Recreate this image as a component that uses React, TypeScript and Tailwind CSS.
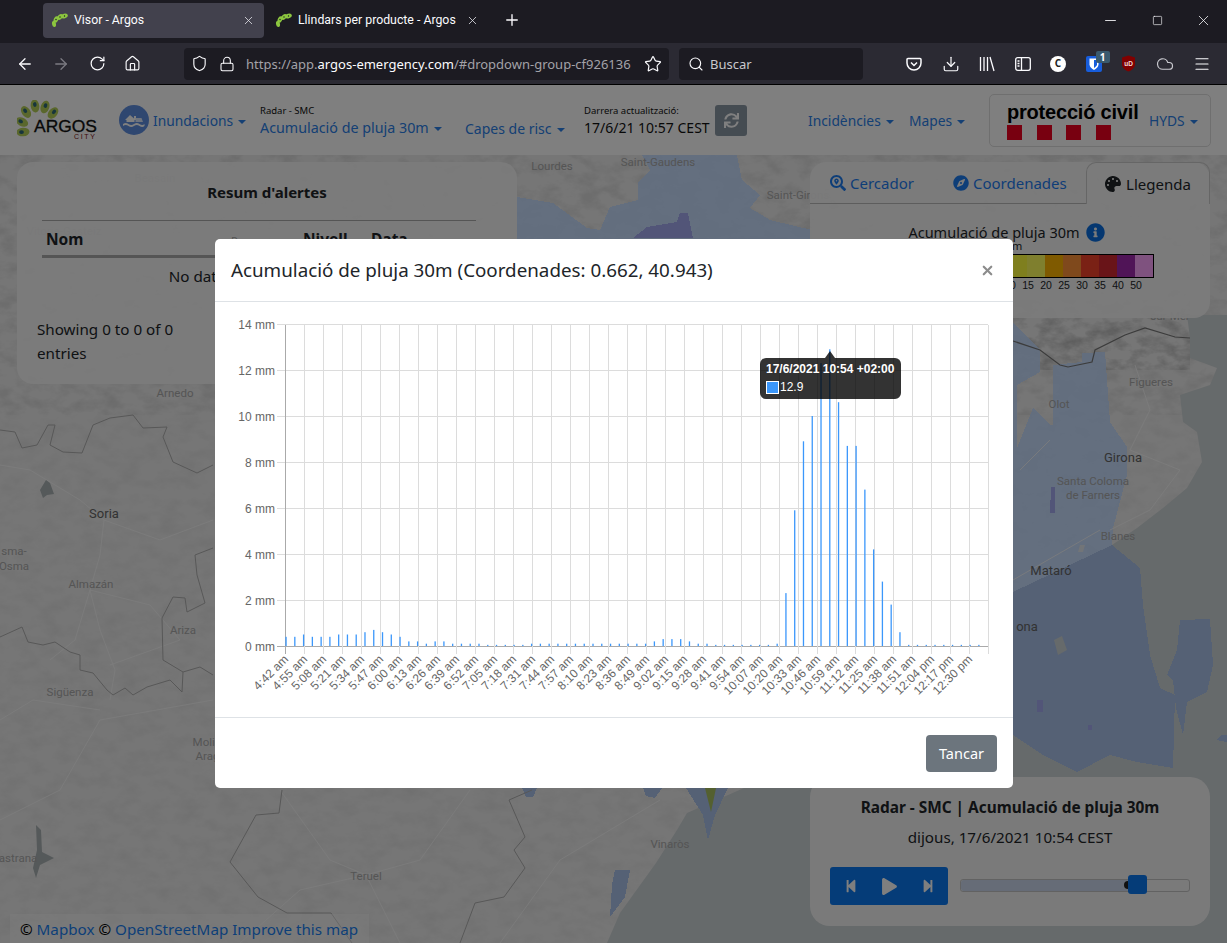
import { ArrowLeft, ArrowRight, Cloud, Download, House, Lock, Menu, Minus, Plus, RotateCw, Search, Shield, Square, Star, X } from "lucide-react";
import { FaCompass, FaInfoCircle, FaPalette, FaPlay, FaSearchLocation, FaStepBackward, FaStepForward, FaSync } from "react-icons/fa";

// valors de pluja cada 6 minuts, des de les 4:42
const rain = [
  0.4, 0.4, 0.5, 0.4, 0.4, 0.4, 0.5, 0.5, 0.5, 0.6, 0.7, 0.6, 0.5, 0.4, 0.2, 0.2, 0.1, 0.2, 0.2, 0.1,
  0.1, 0.1, 0.1, 0.05, 0.05, 0.05, 0.05, 0.05, 0.1, 0.1, 0.1, 0.1, 0.1, 0.1, 0.1, 0.1, 0.1, 0.1, 0.1, 0.1,
  0.1, 0.1, 0.2, 0.3, 0.3, 0.3, 0.2, 0.1, 0.1, 0.05, 0.05, 0.05, 0.05, 0.05, 0.05, 0.05, 0.1, 2.3, 5.9, 8.9,
  10, 12.3, 12.9, 10.6, 8.7, 8.7, 6.8, 4.2, 2.8, 1.8, 0.6, 0.05, 0.05, 0.05, 0.05, 0.05, 0.05, 0.05, 0.05, 0.05,
];

const ticks = [
  "4:42 am", "4:55 am", "5:08 am", "5:21 am", "5:34 am", "5:47 am", "6:00 am", "6:13 am", "6:26 am", "6:39 am",
  "6:52 am", "7:05 am", "7:18 am", "7:31 am", "7:44 am", "7:57 am", "8:10 am", "8:23 am", "8:36 am", "8:49 am",
  "9:02 am", "9:15 am", "9:28 am", "9:41 am", "9:54 am", "10:07 am", "10:20 am", "10:33 am", "10:46 am", "10:59 am",
  "11:12 am", "11:25 am", "11:38 am", "11:51 am", "12:04 pm", "12:17 pm", "12:30 pm",
];

const places = [
  { t: "Lourdes", x: 552, y: 167 },
  { t: "Saint-Gaudens", x: 658, y: 163 },
  { t: "Saint-Girons", x: 798, y: 196 },
  { t: "Beasain", x: 155, y: 179 },
  { t: "Vitoria-Gasteiz", x: 64, y: 232 },
  { t: "Arnedo", x: 175, y: 394 },
  { t: "Soria", x: 104, y: 514, big: true },
  { t: "Osma", x: 14, y: 567 },
  { t: "sma-", x: 14, y: 552 },
  { t: "Almazán", x: 91, y: 585 },
  { t: "Ariza", x: 183, y: 631 },
  { t: "Sigüenza", x: 70, y: 693 },
  { t: "Molina", x: 210, y: 743 },
  { t: "Aragón", x: 214, y: 757 },
  { t: "astrana", x: 18, y: 859 },
  { t: "Teruel", x: 366, y: 877 },
  { t: "Vinaròs", x: 670, y: 845 },
  { t: "Figueres", x: 1151, y: 383 },
  { t: "Olot", x: 1059, y: 405 },
  { t: "Girona", x: 1123, y: 458, big: true },
  { t: "Santa Coloma", x: 1093, y: 482 },
  { t: "de Farners", x: 1093, y: 496 },
  { t: "Blanes", x: 1118, y: 537 },
  { t: "Mataró", x: 1051, y: 571, big: true },
  { t: "ona", x: 1027, y: 627, big: true },
  { t: "sur-Mer", x: 1170, y: 317 },
];

const legendCells = ["#ffff3c", "#ffff3c", "#ffff3c", "#ffff3c", "#ffff3c", "#ffff3c", "#ffff5c", "#ffb400", "#ff9338", "#f4422a", "#d22830", "#a028ae", "#ffa4fe"];

function Caret() {
  return <span className="inline-block ml-[5px] align-middle border-x-[4px] border-t-[4px] border-x-transparent border-t-current" />;
}

function Favicon() {
  return (
    <svg width="18" height="16" viewBox="0 0 18 16" className="shrink-0">
      <g fill="#8cc63f">
        <ellipse cx="3" cy="12" rx="2" ry="3" transform="rotate(-10 3 12)" />
        <ellipse cx="5" cy="7.500" rx="2.200" ry="3.400" transform="rotate(25 5 7.500)" />
        <ellipse cx="9" cy="5" rx="2.200" ry="3.400" transform="rotate(50 9 5)" />
        <ellipse cx="13.500" cy="4" rx="2.200" ry="3.400" transform="rotate(75 13.500 4)" />
      </g>
      <g fill="#1c1b22">
        <circle cx="5" cy="7.500" r="0.700" />
        <circle cx="9" cy="5" r="0.700" />
        <circle cx="13.500" cy="4" r="0.700" />
      </g>
    </svg>
  );
}

function BrowserTab({ title, active }: { title: string; active?: boolean }) {
  return (
    <div className={`flex items-center w-[221px] h-[35px] pl-[8px] pr-[9px] rounded-[4px] ${active ? "bg-[#42414d]" : ""}`}>
      <Favicon />
      <span className="ml-[5px] flex-1 font-['Roboto',sans-serif] text-[12.300px] text-[#fbfbfe] truncate">{title}</span>
      <X size={13} strokeWidth={1.5} className="text-[#e0e0e6]" />
    </div>
  );
}

function BrowserChrome() {
  return (
    <div className="shrink-0">
      <div className="h-[43px] bg-[#1c1b22] flex items-center pl-[43px] pb-[3px]">
        <BrowserTab title="Visor - Argos" active />
        <div className="w-[3px]" />
        <BrowserTab title="Llindars per producte - Argos" />
        <Plus size={18} strokeWidth={1.8} className="ml-[15px] text-[#fbfbfe]" />
        <div className="ml-auto flex items-center text-[#fbfbfe]">
          <Minus size={17} strokeWidth={1.2} />
          <Square size={11} strokeWidth={1.400} className="ml-[33px]" />
          <X size={17} strokeWidth={1.1} className="ml-[32px] mr-[15px]" />
        </div>
      </div>
      <div className="h-[42px] bg-[#2b2a33] border-b border-black flex items-center text-[#fbfbfe]">
        <ArrowLeft size={18} strokeWidth={1.7} className="ml-[16px]" />
        <ArrowRight size={18} strokeWidth={1.7} className="ml-[18px] text-[#7c7b83]" />
        <RotateCw size={17} strokeWidth={1.7} className="ml-[19px]" />
        <House size={17} strokeWidth={1.6} className="ml-[18px]" />
        <div className="ml-[43px] w-[485px] h-[32px] rounded-[4px] bg-[#1c1b22] flex items-center pl-[7px]">
          <Shield size={17} strokeWidth={1.6} />
          <Lock size={16} strokeWidth={1.6} className="ml-[11px]" />
          <div className="ml-[11px] w-[390px] overflow-hidden whitespace-nowrap text-[13px] pt-[2px] text-[#a3a2a8]">
            https://app.<span className="text-[#fbfbfe]">argos-emergency.com</span>/#dropdown-group-cf926136
          </div>
          <Star size={18} strokeWidth={1.6} className="ml-[8px]" />
        </div>
        <div className="ml-[10px] w-[184px] h-[32px] rounded-[4px] bg-[#1c1b22] flex items-center pl-[9px]">
          <Search size={16} strokeWidth={1.7} />
          <span className="ml-[6px] text-[13px] pt-[2px] text-[#c8c8cc]">Buscar</span>
        </div>
        <div className="relative flex-1">
          <ToolbarIcons />
        </div>
      </div>
    </div>
  );
}

function ToolbarIcons() {
  return (
    <div className="flex items-center justify-between pl-[43px] pr-[16px] h-[20px]">
      <svg width="16" height="16" viewBox="0 0 16 16" fill="none" stroke="#fbfbfe" strokeWidth="1.5">
        <path d="M2 2.500h12a1 1 0 0 1 1 1V7a7 7 0 0 1-14 0V3.500a1 1 0 0 1 1-1z" />
        <path d="M5 6.500l3 3 3-3" />
      </svg>
      <Download size={18} strokeWidth={1.6} />
      <svg width="16" height="16" viewBox="0 0 16 16" fill="none" stroke="#fbfbfe" strokeWidth="1.3">
        <path d="M1.500 1v14M5 1v14M8.500 1v14M11 1l4 14" />
      </svg>
      <svg width="16" height="14" viewBox="0 0 16 14" fill="none" stroke="#fbfbfe" strokeWidth="1.3">
        <rect x="0.700" y="0.700" width="14.600" height="12.600" rx="2" />
        <path d="M6.500 1v12M2.500 4h2M2.500 6.500h2M2.500 9h2" />
      </svg>
      <div className="w-[16px] h-[16px] rounded-full bg-white text-[#222] text-[10px] font-bold flex items-center justify-center">C</div>
      <div className="relative w-[16px] h-[16px] rounded-[2px] bg-[#175ddc]">
        <svg width="16" height="16" viewBox="0 0 16 16">
          <path d="M3.500 2.500h9v6c0 2.500-2.500 4.500-4.500 5.500-2-1-4.500-3-4.500-5.500z" fill="#fff" />
          <path d="M8 4v8c1.500-1 3-2.200 3-3.800V4z" fill="#175ddc" />
        </svg>
        <span className="absolute -top-[5px] left-[10px] w-[14px] h-[12px] rounded-[2px] bg-[#3a5a6e] text-[10px] leading-[12px] text-center font-bold text-white">1</span>
      </div>
      <svg width="15" height="17" viewBox="0 0 15 17">
        <path d="M7.500 0.500l6.500 2v7c0 3-3.500 6-6.500 7-3-1-6.500-4-6.500-7v-7z" fill="#800000" />
        <text x="7.500" y="10.500" textAnchor="middle" fontSize="6.500" fontWeight="700" fill="#f2dada" fontFamily="Liberation Sans">uD</text>
      </svg>
      <Cloud size={18} strokeWidth={1.6} className="text-[#c9c9cf]" />
      <Menu size={18} strokeWidth={1.6} />
    </div>
  );
}

function ArgosLogo() {
  const petals = [
    { x: 23, y: 132, r: -95 },
    { x: 22, y: 122, r: -62 },
    { x: 26, y: 112, r: -35 },
    { x: 35, y: 106, r: -8 },
    { x: 45, y: 107, r: 18 },
    { x: 53, y: 113, r: 42 },
  ];
  return (
    <svg width="82" height="40" viewBox="17 100 82 40" className="shrink-0">
      {petals.map((p) => (
        <g key={p.x + p.y} transform={`rotate(${p.r} ${p.x} ${p.y})`}>
          <ellipse cx={p.x} cy={p.y} rx="4.300" ry="6.500" fill="#b4cf58" />
          <ellipse cx={p.x} cy={p.y - 1.500} rx="1.800" ry="2.400" fill="#2f6a78" />
        </g>
      ))}
      <text x="34" y="132" fontSize="16" fontFamily="Liberation Sans" textLength="63" lengthAdjust="spacingAndGlyphs" fill="#111" stroke="#111" strokeWidth="0.300">ARGOS</text>
      <text x="74" y="139" fontSize="7" fontFamily="Liberation Sans" textLength="21" fill="#7a1010">CITY</text>
    </svg>
  );
}

function PageHeader() {
  const link = "text-[#2a80e8]";
  return (
    <div className="h-[70px] shrink-0 bg-white flex items-center pl-[17px] relative text-[13.800px]">
      <ArgosLogo />
      <svg width="30" height="30" viewBox="0 0 30 30" className="ml-[20px] shrink-0">
        <circle cx="15" cy="15" r="15" fill="#5f8ee0" />
        <path d="M6 15l5-5 4 3.500V11h2v4h-1.500v2H7.500v-2z" fill="#fff" />
        <path d="M16.500 13h6l1.500 4h-7.500z" fill="#dbe6fa" />
        <path d="M4 19c2-1.200 3.500-1.200 5.500 0s3.500 1.200 5.500 0 3.500-1.200 5.500 0 3.500 1.200 5 0v2c-1.500 1.200-3 1.200-5 0s-3.500-1.200-5.500 0-3.500 1.200-5.500 0-3.500-1.200-5.500 0z" fill="#fff" />
      </svg>
      <span className={`ml-[4px] mt-[2px] w-[107px] whitespace-nowrap ${link}`}>
        Inundacions
        <Caret />
      </span>
      <div className="w-[205px] mt-[3px]">
        <div className="text-[9.500px] leading-[12px] text-[#111]">Radar - SMC</div>
        <div className={`text-[14.300px] leading-[22px] whitespace-nowrap ${link}`}>
          Acumulació de pluja 30m
          <Caret />
        </div>
      </div>
      <div className={`w-[119px] mt-[16px] text-[14px] whitespace-nowrap ${link}`}>
        Capes de risc
        <Caret />
      </div>
      <div className="w-[131px] mt-[3px]">
        <div className="text-[9.500px] leading-[12px] text-[#111]">Darrera actualització:</div>
        <div className="text-[14px] leading-[22px] text-[#111] whitespace-nowrap">17/6/21 10:57 CEST</div>
      </div>
      <div className="w-[32px] h-[31px] rounded-[3px] bg-[#8a98a4] flex items-center justify-center">
        <FaSync size={15} className="text-white" />
      </div>
      <span className={`ml-[61px] mt-[2px] w-[101px] whitespace-nowrap ${link}`}>
        Incidències
        <Caret />
      </span>
      <span className={`w-[80px] mt-[2px] whitespace-nowrap ${link}`}>
        Mapes
        <Caret />
      </span>
      <div className="w-[222px] h-[53px] rounded-[5px] border border-[#dedede] flex items-center pl-[17px] pr-[10px]">
        <div className="w-[142px]">
          <div className="font-['Liberation_Sans',sans-serif] font-bold text-[20px] leading-[22px] tracking-[-0.2px] text-black whitespace-nowrap">protecció civil</div>
          <div className="mt-[2px] flex gap-[14.500px]">
            <span className="w-[15px] h-[15px] bg-[#f00020]" />
            <span className="w-[15px] h-[15px] bg-[#f00020]" />
            <span className="w-[15px] h-[15px] bg-[#f00020]" />
            <span className="w-[15px] h-[15px] bg-[#f00020]" />
          </div>
        </div>
        <span className={`whitespace-nowrap mt-[2px] ${link}`}>
          HYDS
          <Caret />
        </span>
      </div>
    </div>
  );
}

// el mapa és un dibuix: coordenades de pàgina
function MapDrawing() {
  return (
    <svg width="1227" height="788" viewBox="0 155 1227 788" className="absolute inset-0">
      <defs>
        <filter id="hills" x="0" y="0" width="100%" height="100%">
          <feTurbulence type="fractalNoise" baseFrequency="0.05 0.08" numOctaves="4" seed="7" />
          <feColorMatrix values="0 0 0 0 0  0 0 0 0 0  0 0 0 0 0  1.600 0 0 0 -0.620" />
        </filter>
      </defs>
      <rect x="0" y="155" width="1227" height="788" fill="#ececec" />
      <rect x="0" y="155" width="1227" height="788" filter="url(#hills)" opacity="0.05" />
      <rect x="0" y="155" width="1227" height="260" filter="url(#hills)" opacity="0.06" />
      <rect x="1000" y="300" width="190" height="70" filter="url(#hills)" opacity="0.2" />
      <path
        d="M1187 315L1190 338L1190 358L1217 368L1210 385L1180 395L1183 422L1197 432L1202 462L1187 488L1163 508L1137 528L1112 545L1013 592L744 788L687 813L677 830L656 863L620 913L607 943H1227V315z"
        fill="#cdd4d6"
      />
      <path
        d="M642 155H737L742 180L760 195L750 208L770 220L812 230V330H1013V592L1112 545L1113 528L1127 475L1127 447L1110 422L1105 352L1082 353L1082 362L1053 365L1053 425L1050 425L1033 408L1017 448V385L1040 372L1040 350L1013 323L900 320L517 240V197L553 203L587 228L600 230L610 207L638 200L638 182L650 170z"
        fill="#c4dcff"
        opacity="0.92"
        shapeRendering="crispEdges"
      />
      <g fill="#aac2ea" shapeRendering="crispEdges">
        <path d="M1112 545L1140 568L1143 605L1150 655L1160 688L1175 695L1173 768L1137 762L1110 755L1077 772L1043 755L1013 735V592z" />
        <path d="M1180 620L1210 619L1213 665L1207 692L1187 702L1183 735L1176 708L1173 680L1167 675L1177 650z" />
        <path d="M1221 735H1227V742L1216 740z" />
        <path d="M615 870L630 870L625 897L610 917L612 885z" />
        <path d="M522 788H537L533 797L526 797z" />
        <path d="M643 788H662L655 798L646 796z" />
        <path d="M686 788H728L715 815L708 840L703 815z" />
      </g>
      <path d="M705 788H716L711 812z" fill="#a8c060" />
      <path d="M1054 640L1062 636L1067 650L1058 655z" fill="#cdd4d6" />
      <path d="M1080 545H1085L1083 552H1078z" fill="#ececec" opacity="0.8" />
      <g fill="#a4aaf0" shapeRendering="crispEdges">
        <path d="M633 238L647 227L677 222L680 213L688 213L693 238z" />
        <path d="M1051 487H1055V513H1050z" />
        <path d="M1037 700H1043V712H1037z" />
        <path d="M1088 725H1092V730H1088z" />
      </g>
      <g fill="none" stroke="#fafafa" strokeWidth="0.800">
        <path d="M0 465L30 470L80 500L104 520L100 555L90 590L100 630L115 670L110 700" />
        <path d="M104 520L160 540L213 520M90 590L75 640L50 660M90 590L150 605L180 640L110 665" />
        <path d="M0 720L33 700L100 710M0 820L60 790L100 720L213 700" />
        <path d="M280 790L330 860L366 875L420 860L470 790M366 875L400 943M366 875L300 890L240 943" />
        <path d="M500 943L560 860L660 800" />
        <path d="M1135 365L1150 410L1130 450L1180 470L1150 510L1110 530M1050 440L1020 470M1013 580L1100 530" />
      </g>
      <g fill="none" stroke="#b0b0b0" strokeWidth="1">
        <path d="M0 430L15 432L22 448L37 445L48 425L55 425L50 445L63 452L82 453L93 425L110 418L133 415L143 428L167 427L163 437L173 462L197 473L213 465" />
        <path d="M0 637L22 627L28 642L43 645L55 642L70 652L80 655L80 670L93 673L107 690L113 695L125 688L133 695L147 687L170 680L182 692L183 672L163 660L162 618L173 597L185 598L187 612L205 603L197 575L195 555L213 548" />
        <path d="M183 672L200 667L213 675" />
        <path d="M282 790L279 813L256 815L230 862L258 897L287 913L331 913L352 943" />
        <path d="M460 943L475 903L504 897L525 868L514 850L525 837L509 800L532 790" />
      </g>
      <path d="M1013 341L1040 350L1060 365L1068 367L1092 362L1095 350L1125 335L1145 328L1175 337L1190 338" fill="none" stroke="#777" strokeWidth="1.200" />
      <path d="M40 490L46 480L50 483L54 494L47 495L43 498z" fill="#aab2b4" />
      <path d="M36 825L37 850L33 868L36 878L40 865L54 858L42 852L41 830z" fill="#aab2b4" />
    </svg>
  );
}

function MapLabels() {
  return (
    <>
      {places.map((p) => (
        <span
          key={p.t}
          className={`absolute -translate-x-1/2 -translate-y-1/2 font-['Roboto',sans-serif] whitespace-nowrap ${p.big ? "text-[13px] text-[#666]" : "text-[11.500px] text-[#aaa]"}`}
          style={{ left: p.x, top: p.y - 155 }}
        >
          {p.t}
        </span>
      ))}
    </>
  );
}

function AlertsPanel() {
  return (
    <div className="absolute left-[17px] top-[7px] w-[500px] h-[222px] rounded-[16px] bg-[#f7f7f7]/95 pl-[25px] text-[#212529]">
      <div className="w-[450px] h-[58px] pt-[18px] text-center text-[15px] font-bold leading-[24px]">Resum d'alertes</div>
      <div className="w-[434px] border-t border-[#aaa] pt-[7px] border-b-[3px] border-b-[#aaa] flex items-baseline px-[4px] font-bold text-[15.500px] h-[38px]">
        <span className="w-[185px]">Nom</span>
        <span className="w-[72px] font-normal text-[11px] text-[#aaa] whitespace-nowrap">Perspec ↑↓</span>
        <span className="w-[68px] whitespace-nowrap">Nivell</span>
        <span className="w-[86px]">Data</span>
        <span className="font-normal text-[10px] text-[#aaa]">↑↓</span>
      </div>
      <div className="w-[434px] text-center text-[15.200px] leading-[22px] mt-[7px]">No data available in table</div>
      <div className="-ml-[5px] mt-[30px] text-[15.200px] leading-[24px] w-[170px]">Showing 0 to 0 of 0 entries</div>
    </div>
  );
}

function LegendPanel() {
  return (
    <div className="absolute left-[810px] top-[7px] w-[400px] h-[156px] rounded-[16px] bg-[#f7f7f7]/95 text-[#212529]">
      <div className="flex h-[42px] text-[15px] items-stretch">
        <div className="w-[276px] border-b border-[#bbb] flex items-center text-[#1d7cf0]">
          <FaSearchLocation size={16} className="ml-[20px]" />
          <span className="ml-[4px] pt-[1px]">Cercador</span>
          <FaCompass size={16} className="ml-[39px]" />
          <span className="ml-[4px] pt-[1px]">Coordenades</span>
        </div>
        <div className="flex-1 rounded-t-[10px] border-x border-t border-[#ccc] flex items-center justify-center">
          <FaPalette size={16} />
          <span className="ml-[5px] pt-[1px]">Llegenda</span>
        </div>
      </div>
      <div className="mt-[17px] flex justify-center items-center pr-[7px] text-[14.500px] leading-[22px]">
        Acumulació de pluja 30m
        <FaInfoCircle size={19} className="ml-[6px] text-[#0a6fe0]" />
      </div>
      <div className="text-center text-[11px] leading-[10px] -mt-[2px] pl-[4px]">mm</div>
      <div className="mt-[3px] flex justify-end pr-[56px]">
        <div className="flex h-[24px] border border-black">
          {legendCells.map((c, i) => (
            <span key={i} className="w-[18px]" style={{ background: c }} />
          ))}
        </div>
      </div>
      <div className="flex justify-end pr-[65px] text-[10.500px] leading-[14px] font-['Liberation_Sans',sans-serif]">
        {["0", "5", "10", "15", "20", "25", "30", "35", "40", "50"].map((v) => (
          <span key={v} className="w-[18px] text-center">{v}</span>
        ))}
      </div>
    </div>
  );
}

function PlayerPanel() {
  return (
    <div className="absolute left-[810px] top-[622px] w-[400px] h-[149px] rounded-[20px] bg-[#f7f7f7]/95 text-[#212529] text-center">
      <div className="pt-[20px] text-[15.400px] leading-[22px] font-bold whitespace-nowrap">Radar - SMC | Acumulació de pluja 30m</div>
      <div className="mt-[7px] text-[15.200px] leading-[22px]">dijous, 17/6/2021 10:54 CEST</div>
      <div className="mt-[19px] px-[20px] flex items-center">
        <div className="w-[118px] h-[38px] rounded-[3px] bg-[#0a78f0] flex items-center text-white">
          <FaStepBackward size={14} className="ml-[14px]" />
          <FaPlay size={17} className="ml-[23px]" />
          <FaStepForward size={14} className="ml-[23px]" />
        </div>
        <div className="relative ml-[12px] w-[230px] h-[13px] -mt-[2px] rounded-[3px] border border-[#c4c4c4] bg-[#f5f5f5]">
          <div className="h-full w-[168px] rounded-l-[3px] bg-[#ccd9ee]" />
          <span className="absolute left-[163px] top-[1px] w-[8px] h-[8px] rounded-full bg-[#222]" />
          <span className="absolute left-[167px] -top-[5px] w-[19px] h-[19px] rounded-[3px] bg-[#0a78f0]" />
        </div>
      </div>
    </div>
  );
}

function ChartSvg() {
  const font = "Liberation Sans";
  return (
    <svg width="798" height="415" viewBox="215 302 798 415" className="block">
      {[0, 1, 2, 3, 4, 5, 6, 7].map((i) => {
        const y = 646.5 - i * 46;
        return (
          <g key={i}>
            <line x1="277" x2="988" y1={y} y2={y} stroke={i === 0 ? "#aaa" : "#dcdcdc"} />
            <text x="275" y={y + 4} textAnchor="end" fontSize="12" fill="#666" fontFamily={font}>
              {i * 2} mm
            </text>
          </g>
        );
      })}
      {Array.from({ length: 38 }).map((_, i) => {
        const x = 285.5 + i * 19;
        return <line key={i} x1={x} x2={x} y1="325" y2="654" stroke={i === 0 ? "#aaa" : "#dcdcdc"} />;
      })}
      {rain.map((v, i) => (
        <rect key={i} x={285.4 + i * 8.77} y={646 - v * 23} width="1.3" height={v * 23} fill="#3b97fb" />
      ))}
      {ticks.map((t, i) => {
        const x = 289 + i * 19;
        return (
          <text key={t} x={x} y="660" textAnchor="end" fontSize="12" fill="#666" fontFamily={font} transform={`rotate(-45 ${x} 660)`}>
            {t}
          </text>
        );
      })}
    </svg>
  );
}

function ChartModal() {
  return (
    <div className="absolute left-[215px] top-[154px] w-[798px] h-[549px] bg-white rounded-[5px] flex flex-col">
      <div className="h-[63px] shrink-0 border-b border-[#dee2e6] flex items-center pl-[16px] pr-[18px]">
        <h5 className="flex-1 text-[18.800px] text-[#212529]">Acumulació de pluja 30m (Coordenades: 0.662, 40.943)</h5>
        <X size={15} strokeWidth={3.500} className="text-[#8c8c8c]" />
      </div>
      <div className="relative h-[415px] shrink-0">
        <ChartSvg />
        <div className="absolute left-[545px] top-[56px] w-[141px] h-[41px] rounded-[6px] bg-black/80 text-white font-['Liberation_Sans',sans-serif] text-[12px] px-[6px] pt-[3px]">
          <span className="absolute left-[65px] -top-[7px] border-x-[5px] border-b-[7px] border-x-transparent border-b-black/80" />
          <div className="font-bold leading-[16px] whitespace-nowrap">17/6/2021 10:54 +02:00</div>
          <div className="mt-[2px] flex items-center leading-[16px]">
            <span className="w-[13px] h-[13px] bg-[#3b97fb] border border-white mr-[1px]" />
            12.9
          </div>
        </div>
      </div>
      <div className="flex-1 border-t border-[#dee2e6] flex justify-end items-start pt-[17px] pr-[16px]">
        <button className="w-[71px] h-[37px] rounded-[4px] bg-[#6c757d] text-white text-[14.500px]">Tancar</button>
      </div>
    </div>
  );
}

export default function App() {
  return (
    <div className="w-[1227px] h-[943px] overflow-hidden flex flex-col font-['Noto_Sans',sans-serif] bg-white">
      <BrowserChrome />
      <div className="relative flex-1">
        <PageHeader />
        <div className="relative h-[788px] overflow-hidden">
          <MapDrawing />
          <MapLabels />
          <AlertsPanel />
          <LegendPanel />
          <PlayerPanel />
          <div className="absolute left-[10px] top-[759px] w-[359px] h-[29px] bg-white/40 pl-[10px] text-[15.200px] leading-[31px] whitespace-nowrap text-black">
            © <span className="text-[#1a7ff0]">Mapbox</span> © <span className="text-[#1a7ff0]">OpenStreetMap</span> <span className="text-[#1a7ff0]">Improve this map</span>
          </div>
        </div>
        {/* backdrop del modal */}
        <div className="absolute inset-0 bg-black/50" />
        <ChartModal />
      </div>
    </div>
  );
}
